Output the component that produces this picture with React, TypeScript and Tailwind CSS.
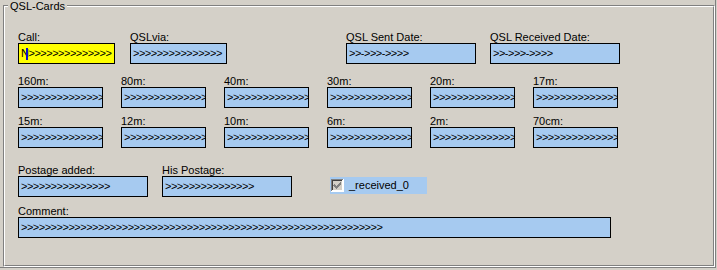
import React from 'react';

const CHEV16 = '>>>>>>>>>>>>>>>>';

function Field({ label, width, children, bg = 'bg-[#a6caf0]' }: { label: string; width: string; children: React.ReactNode; bg?: string }) {
  return (
    <div className={`flex flex-col ${width}`}>
      <div className="h-[11px] leading-[11px] whitespace-nowrap">{label}</div>
      <div className={`h-[21px] border border-black ${bg} overflow-hidden whitespace-nowrap pl-[2px] leading-[19px] tracking-[-0.5px]`}>
        {children}
      </div>
    </div>
  );
}

function DisabledCheck() {
  return (
    <svg width="13" height="13" viewBox="0 0 13 13" shapeRendering="crispEdges">
      <rect x="0" y="0" width="13" height="13" fill="#ffffff" />
      <rect x="0" y="0" width="12" height="1" fill="#808080" />
      <rect x="0" y="0" width="1" height="12" fill="#808080" />
      <rect x="1" y="1" width="10" height="1" fill="#404040" />
      <rect x="1" y="1" width="1" height="10" fill="#404040" />
      <rect x="2" y="2" width="9" height="9" fill="#d4d0c8" />
      <path
        d="M3 5h1v1h1v1h1v-1h1v-1h1v-1h1v-1h1v3h-1v1h-1v1h-1v1h-1v1h-1v-1h-1v-1h-1v-1h-1z"
        fill="#808080"
      />
    </svg>
  );
}

export default function App() {
  const bands1 = ['160m:', '80m:', '40m:', '30m:', '20m:', '17m:'];
  const bands2 = ['15m:', '12m:', '10m:', '6m:', '2m:', '70cm:'];

  return (
    <div className="relative w-[717px] h-[270px] bg-[#d4d0c8] font-['Liberation_Sans',Arial,sans-serif] text-[11px] text-black">
      <div className="w-[716px] h-[268px] border-r border-b border-[#808080] pt-[5px] pl-[3px]">
        <div className="w-[712px] h-[262px] border border-t-[#808080] border-l-[#808080] border-r-white border-b-white">
          <div className="h-full border border-t-white border-l-white border-r-[#808080] border-b-[#808080] pl-[13px] pt-[25px] flex flex-col">
            {/* row 1 */}
            <div className="flex">
              <Field label="Call:" width="w-[97px]" bg="bg-[#ffff00]">
                <span>N</span>
                <span className="inline-block align-middle w-[2px] h-[12px] -ml-[2px] bg-[#1010d0]" />
                <span>{'>>>>>>>>>>>>>>'}</span>
              </Field>
              <div className="ml-[15px]">
                <Field label="QSLvia:" width="w-[97px]">{'>>>>>>>>>>>>>>>'}</Field>
              </div>
              <div className="ml-[119px]">
                <Field label="QSL Sent Date:" width="w-[130px]">{'>>->>>->>>>'}</Field>
              </div>
              <div className="ml-[14px]">
                <Field label="QSL Received Date:" width="w-[130px]">{'>>->>>->>>>'}</Field>
              </div>
            </div>

            {/* row 2 */}
            <div className="flex gap-[18px] mt-[12px]">
              {bands1.map((b) => (
                <Field key={b} label={b} width="w-[85px]">{CHEV16}</Field>
              ))}
            </div>

            {/* row 3 */}
            <div className="flex gap-[18px] mt-[8px]">
              {bands2.map((b) => (
                <Field key={b} label={b} width="w-[85px]">{CHEV16}</Field>
              ))}
            </div>

            {/* row 4 */}
            <div className="flex items-start mt-[17px]">
              <Field label="Postage added:" width="w-[130px]">{'>>>>>>>>>>>>>>>'}</Field>
              <div className="ml-[14px]">
                <Field label="His Postage:" width="w-[130px]">{'>>>>>>>>>>>>>>>'}</Field>
              </div>
              <div className="ml-[38px] mt-[12px] w-[97px] h-[17px] bg-[#a6caf0] flex items-center pl-[1px] gap-[5px]">
                <DisabledCheck />
                <span className="leading-[13px]">_received_0</span>
              </div>
            </div>

            {/* row 5 */}
            <div className="flex mt-[9px]">
              <Field label="Comment:" width="w-[593px]">
                {'>>>>>>>>>>>>>>>>>>>>>>>>>>>>>>>>>>>>>>>>>>>>>>>>>>>>>>>>>>>>>'}
              </Field>
            </div>
          </div>
        </div>
      </div>
      <span className="absolute top-0 left-[8px] px-[2px] leading-[13px] bg-[#d4d0c8]">QSL-Cards</span>
    </div>
  );
}
